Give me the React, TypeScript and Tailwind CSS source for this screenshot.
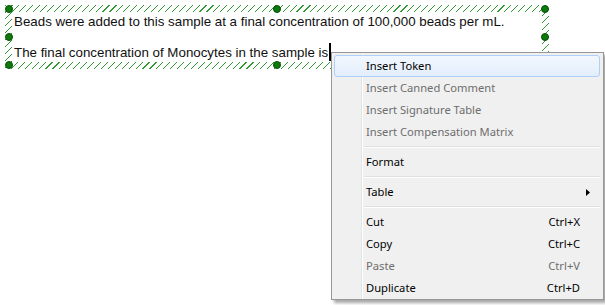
import { ReactNode } from "react";

type Item =
  | { kind: "item"; label: string; shortcut?: string; disabled?: boolean; active?: boolean; submenu?: boolean }
  | { kind: "sep" };

const items: Item[] = [
  { kind: "item", label: "Insert Token", active: true },
  { kind: "item", label: "Insert Canned Comment", disabled: true },
  { kind: "item", label: "Insert Signature Table", disabled: true },
  { kind: "item", label: "Insert Compensation Matrix", disabled: true },
  { kind: "sep" },
  { kind: "item", label: "Format" },
  { kind: "sep" },
  { kind: "item", label: "Table", submenu: true },
  { kind: "sep" },
  { kind: "item", label: "Cut", shortcut: "Ctrl+X" },
  { kind: "item", label: "Copy", shortcut: "Ctrl+C" },
  { kind: "item", label: "Paste", shortcut: "Ctrl+V", disabled: true },
  { kind: "item", label: "Duplicate", shortcut: "Ctrl+D" },
];

function Handle({ className }: { className: string }) {
  return (
    <span
      className={`absolute size-[8px] rounded-full border border-[#0b4d0b] bg-[#0a7a0a] ${className}`}
    />
  );
}

function MenuRow({ children, active }: { children: ReactNode; active?: boolean }) {
  return (
    <div
      className={`flex h-[22px] items-center rounded-[3px] border ${
        active
          ? "border-[#aecff7] bg-[linear-gradient(#f2f7fe,#e3eefc)]"
          : "border-transparent"
      }`}
    >
      {children}
    </div>
  );
}

export default function App() {
  return (
    <div className="relative h-[305px] w-[605px] bg-white">
      {/* text box with hatched selection frame */}
      <div className="relative ml-[5px] pt-[5px]">
        <div className="h-[64px] w-[544px] bg-[repeating-linear-gradient(135deg,#2f9a2f_0px,#2f9a2f_0.8px,transparent_0.8px,transparent_4.9px)] p-[7px]">
          <div className="h-full w-full bg-white pl-[2px] pt-[2px] font-['Liberation_Sans',Arial,sans-serif] text-[13.33px] leading-[15px] text-[#101010]">
            <div>Beads were added to this sample at a final concentration of 100,000 beads per mL.</div>
            <div className="mt-[14px] flex items-center">
              The final concentration of Monocytes in the sample is
              <span className="ml-[1px] inline-block h-[18px] w-[2px] bg-black" />
            </div>
          </div>
        </div>
        <Handle className="left-[0px] top-[5px]" />
        <Handle className="left-[268px] top-[5px]" />
        <Handle className="left-[536px] top-[5px]" />
        <Handle className="left-[0px] top-[33px]" />
        <Handle className="left-[536px] top-[33px]" />
        <Handle className="left-[0px] top-[61px]" />
        <Handle className="left-[268px] top-[61px]" />
      </div>

      {/* context menu */}
      <div className="absolute left-[331px] top-[52px] flex w-[273px] flex-col border border-[#979797] bg-[#f0f0f0] bg-[linear-gradient(to_right,#f0f0f0_29px,#e2e3e3_29px,#e2e3e3_30px,#ffffff_30px,#ffffff_31px,#f0f0f0_31px)] px-[2px] pt-[2px] pr-[3px] font-['Noto_Sans','Open_Sans',sans-serif] text-[11.2px] text-black shadow-[3px_3px_3px_rgba(0,0,0,0.35)]">
        {items.map((it, i) =>
          it.kind === "sep" ? (
            <div key={i} className="flex h-[8px] items-center pl-[30px]">
              <div className="w-full">
                <div className="h-[1px] bg-[#e0e0e0]" />
                <div className="h-[1px] bg-white" />
              </div>
            </div>
          ) : (
            <MenuRow key={i} active={it.active}>
              <span className={`pl-[31px] ${it.disabled ? "text-[#6d6d6d]" : ""}`}>{it.label}</span>
              {it.shortcut && (
                <span className={`ml-auto pr-[19px] ${it.disabled ? "text-[#6d6d6d]" : ""}`}>
                  {it.shortcut}
                </span>
              )}
              {it.submenu && (
                <svg className="ml-auto mr-[9px]" width="4" height="7" viewBox="0 0 4 7">
                  <path d="M0 0 L4 3.5 L0 7 Z" fill="#000" />
                </svg>
              )}
            </MenuRow>
          )
        )}
      </div>
    </div>
  );
}
